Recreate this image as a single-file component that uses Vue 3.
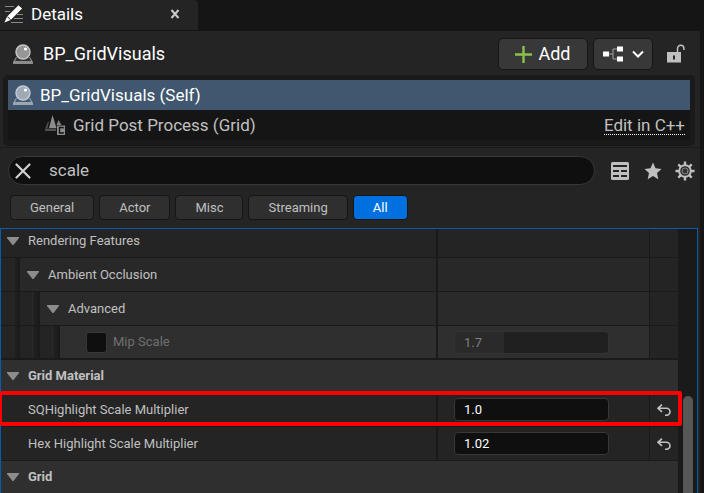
<script setup>
import { ref } from 'vue'

const search = ref('scale')
const filters = ['General', 'Actor', 'Misc', 'Streaming', 'All']
const active = ref('All')

const rows = ref([
  { id: 'rendering', label: 'Rendering Features', level: 0, kind: 'group', first: true },
  { id: 'occlusion', label: 'Ambient Occlusion', level: 1, kind: 'group' },
  { id: 'advanced', label: 'Advanced', level: 2, kind: 'group' },
  { id: 'mip', label: 'Mip Scale', level: 3, kind: 'property', value: '1.7', disabled: true },
  { id: 'material', label: 'Grid Material', level: 0, kind: 'category' },
  { id: 'sq', label: 'SQHighlight Scale Multiplier', level: 0, kind: 'property', value: '1.0', marked: true },
  { id: 'hex', label: 'Hex Highlight Scale Multiplier', level: 0, kind: 'property', value: '1.02' },
  { id: 'grid', label: 'Grid', level: 0, kind: 'category' },
])
</script>

<template>
  <div class="window">
    <div class="tabs">
      <div class="tab">
        <svg class="tab-icon" width="20" height="20" viewBox="0 0 20 20">
          <path d="M1 2.500h9M1 7.500h5M13 10.500h6M10 14.500h9M7 18.500h12" stroke="#8a8a8a" fill="none" />
          <path d="M14.500 1.200l3.600 3.400L6.600 16 0.400 18.500 3.200 12.500z" fill="#fff" />
          <path d="M3.300 12.500l3.200 3.300" stroke="#242424" />
        </svg>
        <span class="tab-title">Details</span>
        <button class="plain" aria-label="Close tab">
          <svg width="10" height="10" viewBox="0 0 10 10"><path d="M1.500 1l7 8M8.500 1l-7 8" stroke="#c8c8c8" stroke-width="2" /></svg>
        </button>
      </div>
    </div>

    <main class="panel">
      <header class="header">
        <svg class="actor" width="20" height="20" viewBox="0 0 20 20">
          <path d="M3 13h14l3 5v2H0v-2z" fill="#8c8c8c" /><path d="M4 13h12l2 4H2z" fill="#333" />
          <circle cx="10" cy="8" r="7" fill="#969696" stroke="#c8c8c8" stroke-width="1.400" /><circle cx="12.500" cy="5" r="1.600" fill="#fff" />
        </svg>
        <h1>BP_GridVisuals</h1>
        <button class="btn add">
          <svg width="17" height="17" viewBox="0 0 17 17"><path d="M8.500 0v17M0 8.500h17" stroke="#8bc24a" stroke-width="2.400" /></svg>
          Add
        </button>
        <button class="btn graph" aria-label="Edit blueprint">
          <svg width="20" height="16" viewBox="0 0 20 16">
            <path d="M5 8h5M14 3h-4v10h4" fill="none" stroke="#a0a0a0" />
            <path d="M0 5.500h6v5H0zM14 .5h6v5h-6zM14 10.500h6v5h-6z" fill="#fff" />
          </svg>
          <svg width="12" height="8" viewBox="0 0 12 8"><path d="M1 1.500l5 5 5-5" fill="none" stroke="#fff" stroke-width="2" /></svg>
        </button>
        <button class="plain" aria-label="Unlock">
          <svg width="18" height="20" viewBox="0 0 18 20">
            <path d="M10.500 9V4.500a3.200 3.200 0 0 1 6.400 0V6" fill="none" stroke="#c0c0c0" stroke-width="1.500" />
            <path d="M0 8h14v10.500H0z" fill="#c0c0c0" /><path d="M6 11.500h2v4H6z" fill="#242424" />
          </svg>
        </button>
      </header>

      <section class="tree">
        <div class="node selected">
          <svg width="20" height="20" viewBox="0 0 20 20">
            <path d="M3 13h14l3 5v2H0v-2z" fill="#9aa6b3" /><path d="M4 13h12l2 4H2z" fill="#465a70" />
            <circle cx="10" cy="8" r="7" fill="#9faab6" stroke="#c5ced6" stroke-width="1.400" /><circle cx="12.500" cy="5" r="1.600" fill="#fff" />
          </svg>
          <span>BP_GridVisuals (Self)</span>
        </div>
        <div class="node child">
          <svg width="20" height="20" viewBox="0 0 20 20">
            <path d="M7.500 0L11.500 13H4z" fill="#8c8c8c" /><path d="M13.500 5l3 5h-5z" fill="#808080" />
            <path d="M3 6.500L4 7 2.500 13H.5z" fill="#505050" /><path d="M0 13.500h11v2.500H0z" fill="#505050" />
            <path d="M12 10.500h8V20h-8z" fill="#8c8c8c" /><path d="M18 13.500v-1h-3.500v5.500H18v-1" fill="none" stroke="#151515" stroke-width="1.400" />
          </svg>
          <span>Grid Post Process (Grid)</span>
          <a href="#">Edit in C++</a>
        </div>
      </section>

      <div class="search-row">
        <div class="search">
          <button class="plain" aria-label="Clear search" @click="search = ''">
            <svg width="16" height="16" viewBox="0 0 16 16"><path d="M1.500 1.500l13 13M14.500 1.500l-13 13" stroke="#d0d0d0" stroke-width="2.200" stroke-linecap="round" /></svg>
          </button>
          <input v-model="search" type="text" aria-label="Search details" />
        </div>
        <div class="tools">
          <button class="plain" aria-label="Property matrix">
            <svg width="18" height="18" viewBox="0 0 18 18">
              <rect width="18" height="18" rx="1.500" fill="#c0c0c0" />
              <path d="M2 3h14v2H2zM2 8h6v2H2zM10 8h6v2h-6zM2 13h6v2H2zM10 13h6v2h-6z" fill="#242424" />
            </svg>
          </button>
          <button class="plain" aria-label="Favorites">
            <svg width="20" height="18" viewBox="-2 0 20 18"><path d="M9 .5l2.500 5.700 6 .7-4.500 4.100 1.300 6.200L9 14l-5.300 3.200L5 11 .5 6.900l6-.7z" fill="#c0c0c0" /></svg>
          </button>
          <button class="plain" aria-label="Settings">
            <svg width="20" height="20" viewBox="0 0 20 20">
              <path d="M10 .5v19M.5 10h19M3.300 3.300l13.400 13.400M16.700 3.300L3.300 16.700" stroke="#c0c0c0" stroke-width="2.400" />
              <circle cx="10" cy="10" r="5.800" fill="#242424" stroke="#c0c0c0" stroke-width="2" />
              <circle cx="10" cy="10" r="3" fill="#333" stroke="#808080" stroke-width="1.200" />
            </svg>
          </button>
        </div>
      </div>

      <nav class="filters">
        <button v-for="f in filters" :key="f" class="filter" :class="{ on: f === active }" @click="active = f">{{ f }}</button>
      </nav>

      <section class="details">
        <div class="rows">
          <div v-for="row in rows" :key="row.id" class="row" :class="[row.kind, 'level' + row.level, { first: row.first, disabled: row.disabled }]">
            <div class="name">
              <i v-for="n in row.level" :key="n" class="indent"></i>
              <input v-if="row.disabled" type="checkbox" :aria-label="'Override ' + row.label" />
              <button v-if="row.kind !== 'property'" class="plain arrow" :aria-label="'Collapse ' + row.label">
                <svg width="12" height="8" viewBox="0 0 12 8"><path d="M0 0h12v1L6.500 8h-1L0 1z" fill="#8c8c8c" /></svg>
              </button>
              <label v-if="row.kind === 'property'" :for="row.id">{{ row.label }}</label>
              <span v-else>{{ row.label }}</span>
            </div>
            <template v-if="row.kind !== 'category'">
              <div class="value">
                <input v-if="row.kind === 'property'" :id="row.id" v-model="row.value" type="text" :disabled="row.disabled" />
              </div>
              <div class="reset">
                <button v-if="row.kind === 'property' && !row.disabled" class="plain" :aria-label="'Reset ' + row.label">
                  <svg width="14" height="12" viewBox="0 0 14 12"><path d="M5 .7L1 4.300l4 3.600M1 4.300h8.500a3.500 3.500 0 0 1 0 7H8" fill="none" stroke="#c0c0c0" stroke-width="1.600" /></svg>
                </button>
              </div>
            </template>
            <div v-if="row.marked" class="mark"></div>
          </div>
        </div>
        <div class="scroll"><div class="thumb"></div></div>
      </section>
    </main>
  </div>
</template>

<style>
body {
  margin: 0;
  background: #151515;
}
</style>

<style scoped>
* {
  box-sizing: border-box;
}
.window {
  display: flex;
  flex-direction: column;
  height: 100vh;
  overflow: hidden;
  background: #151515;
  color: #c0c0c0;
  font: 13px/16px Roboto, sans-serif;
}
button,
input {
  font: inherit;
  color: inherit;
}
.plain {
  display: flex;
  padding: 0;
  border: 0;
  background: none;
}
.tabs {
  flex: none;
  height: 31px;
}
.tab {
  display: flex;
  align-items: center;
  width: 198px;
  height: 30px;
  padding: 0 18px 2px 4px;
  border-radius: 0 4px 0 0;
  background: #242424;
}
.tab-title {
  flex: 1;
  margin-left: 7px;
  color: #fff;
  font-size: 17px;
  line-height: 20px;
}
.panel {
  display: flex;
  flex: 1;
  flex-direction: column;
  min-height: 0;
  margin-right: 4px;
  background: #242424;
}
.header {
  display: flex;
  flex: none;
  align-items: center;
  height: 44px;
  padding: 2px 15px 0 13px;
}
h1 {
  flex: 1;
  margin: 0 0 0 10px;
  color: #fff;
  font-size: 18px;
  font-weight: 400;
  line-height: 22px;
}
.btn {
  display: flex;
  align-items: center;
  justify-content: center;
  height: 32px;
  padding: 0;
  border: 1px solid #151515;
  border-radius: 5px;
  background: #383838;
  color: #fff;
  font-size: 18px;
}
.add {
  gap: 6px;
  width: 90px;
}
.graph {
  gap: 9px;
  width: 60px;
  margin: 0 14px 0 5px;
}
.tree {
  flex: none;
  margin: 0 5px 0 3px;
  padding: 5px 5px 6px;
  border-radius: 5px;
  background: #1a1a1a;
}
.node {
  display: flex;
  align-items: center;
  height: 30px;
  padding: 0 5px;
  background: #151515;
  font-size: 17px;
  line-height: 20px;
}
.node span {
  flex: 1;
  margin-left: 7px;
}
.selected {
  background: #40576f;
  color: #fff;
}
.child {
  padding-left: 37px;
}
.child span {
  margin-left: 8px;
}
.child a {
  border-bottom: 1px dotted #fff;
  color: inherit;
  line-height: 18px;
  text-decoration: none;
}
.search-row {
  display: flex;
  flex: none;
  align-items: center;
  gap: 16px;
  margin-top: 1px;
  padding: 8px 5px 10px 8px;
  border-top: 1px solid #1a1a1a;
}
.search {
  display: flex;
  flex: 1;
  align-items: center;
  gap: 18px;
  min-width: 0;
  height: 29px;
  padding: 0 14px 0 6px;
  border: 1px solid #383838;
  border-radius: 15px;
  background: #0f0f0f;
}
.search input {
  flex: 1;
  min-width: 0;
  padding: 0 0 2px;
  border: 0;
  outline: 0;
  background: none;
  font-size: 17px;
  line-height: 20px;
}
.tools {
  display: flex;
  align-items: center;
  gap: 13px;
}
.filters {
  display: flex;
  flex: none;
  gap: 5px;
  padding: 0 10px 8px;
}
.filter {
  height: 25px;
  padding: 0 19px;
  border: 1px solid #151515;
  border-radius: 4px;
  background: #2f2f2f;
}
.filter.on {
  background: #0070e0;
  color: #fff;
}
.details {
  display: flex;
  flex: 1 0 auto;
  margin-right: 2px;
  border: 1px solid #0f5aa8;
  border-bottom: 0;
  background: #1a1a1a;
}
.rows {
  flex: 1;
}
.row {
  position: relative;
  display: grid;
  grid-template-columns: minmax(0, 1fr) 214px 28px;
  height: 34px;
  border-bottom: 1px solid #1a1a1a;
  background: #242424;
}
.row.first {
  height: 29px;
}
.row.first .name {
  padding-bottom: 5px;
}
.row.level1 {
  background: #282828;
}
.row.level2 {
  background: #2a2a2a;
}
.row.level3 {
  border-bottom-width: 2px;
  background: #2f2f2f;
}
.row.category {
  height: 33px;
  grid-template-columns: 1fr;
  background: #2f2f2f;
  font-weight: 700;
}
.name {
  display: flex;
  align-items: center;
  height: 100%;
}
.indent {
  align-self: stretch;
  width: 20px;
  background: linear-gradient(to right, #242424 12px, #292929 12px, #292929 13px, #222 13px, #191919);
}
.indent:first-child {
  width: 19px;
}
.arrow {
  margin: 0 9px 0 7px;
}
.arrow:first-child {
  margin-left: 6px;
}
.name > label:first-child {
  margin-left: 27px;
}
.name input {
  appearance: none;
  width: 21px;
  height: 21px;
  margin: 0 6px 0 26px;
  border: 1px solid #383838;
  border-radius: 3px;
  background: #0f0f0f;
}
.value {
  display: flex;
  align-items: center;
  padding-left: 16px;
  border: solid #1a1a1a;
  border-width: 0 1px 0 2px;
}
.value input {
  width: 155px;
  height: 23px;
  padding: 0 9px;
  border: 1px solid #383838;
  border-radius: 4px;
  background: #0f0f0f;
  color: #fff;
}
.value input:disabled {
  border-color: #333;
  background: linear-gradient(to right, #2a2a2a 49px, #202020 49px);
  color: #808080;
}
.disabled .name {
  color: #707070;
}
.reset {
  display: flex;
  align-items: center;
  justify-content: center;
  background: #242424;
}
.mark {
  position: absolute;
  top: -2px;
  right: -4px;
  bottom: 0;
  left: -1px;
  z-index: 1;
  border: 4px solid #f00;
  border-left-width: 2px;
  border-radius: 2px;
  pointer-events: none;
}
.scroll {
  width: 19px;
  padding: 167px 4px 0 5px;
}
.thumb {
  height: 100%;
  border-radius: 5px 5px 0 0;
  background: #575757;
}
</style>
